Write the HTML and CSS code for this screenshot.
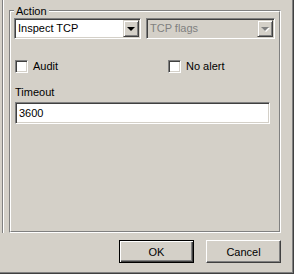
FILE: index.html
```html
<!DOCTYPE html>
<html>
<head>
    <title>Action</title>
    <link rel="stylesheet" href="styles.css">
</head>
<body>
    <div class="window">
        <div class="window-inner">
            <div class="top-area">
                <div class="separator"></div>
                <div class="group">
                    <div class="group-inner">
                        <span class="group-title">Action</span>
                        <div class="combo-row">
                            <div class="combo combo-action">
                                <span class="combo-text">Inspect TCP</span>
                                <span class="combo-btn"><span class="arrow"></span></span>
                            </div>
                            <div class="combo combo-flags disabled">
                                <span class="combo-text">TCP flags</span>
                                <span class="combo-btn"><span class="arrow"></span></span>
                            </div>
                        </div>
                        <div class="check-row">
                            <label class="check-item check-audit">
                                <span class="check-box"></span>
                                <span>Audit</span>
                            </label>
                            <label class="check-item">
                                <span class="check-box"></span>
                                <span>No alert</span>
                            </label>
                        </div>
                        <div class="field-label">Timeout</div>
                        <input class="edit" type="text" value="3600">
                    </div>
                </div>
            </div>
            <div class="buttons">
                <button class="btn btn-default">OK</button>
                <button class="btn">Cancel</button>
            </div>
        </div>
    </div>
</body>
</html>
```

FILE: styles.css
```css
body {
    margin: 0;
    background-color: #d4d0c8;
    font-family: 'Liberation Sans', Arial, sans-serif;
    font-size: 11px;
    color: #000000;
}

.window {
    width: 294px;
    height: 274px;
    box-sizing: border-box;
    border-right: 1px solid #404040;
    border-bottom: 1px solid #404040;
}

.window-inner {
    height: 100%;
    box-sizing: border-box;
    border-right: 1px solid #808080;
    border-bottom: 1px solid #808080;
    display: flex;
    flex-direction: column;
}

.top-area {
    display: flex;
    height: 233px;
}

/* etched line on the left edge */
.separator {
    margin-left: 2px;
    width: 0;
    border-left: 1px solid #808080;
    border-right: 1px solid #ffffff;
}

/* etched group box */
.group {
    margin-left: 5px;
    margin-top: 10px;
    width: 272px;
    height: 223px;
    box-sizing: border-box;
    border: 1px solid;
    border-color: #808080 #ffffff #ffffff #808080;
}

.group-inner {
    position: relative;
    height: 100%;
    box-sizing: border-box;
    border: 1px solid;
    border-color: #ffffff #808080 #808080 #ffffff;
    padding: 6px 0 0 3px;
}

.group-title {
    position: absolute;
    top: -7px;
    left: 3px;
    padding: 0 2px;
    line-height: 13px;
    background-color: #d4d0c8;
}

.combo-row {
    display: flex;
    gap: 5px;
}

.combo {
    display: flex;
    align-items: center;
    height: 21px;
    box-sizing: border-box;
    border: 1px solid;
    border-color: #808080 #ffffff #ffffff #808080;
    box-shadow: inset 1px 1px 0 #404040, inset -1px -1px 0 #d4d0c8;
    background-color: #ffffff;
    padding: 1px;
}

.combo-action {
    width: 127px;
}

.combo-flags {
    width: 129px;
}

.combo-text {
    flex: 1;
    padding-left: 2px;
    line-height: 17px;
    white-space: nowrap;
}

.combo-btn {
    width: 16px;
    height: 17px;
    box-sizing: border-box;
    display: flex;
    align-items: center;
    justify-content: center;
    background-color: #d4d0c8;
    border: 1px solid;
    border-color: #d4d0c8 #404040 #404040 #d4d0c8;
    box-shadow: inset 1px 1px 0 #ffffff, inset -1px -1px 0 #808080;
}

.arrow {
    width: 0;
    height: 0;
    border-left: 4px solid transparent;
    border-right: 4px solid transparent;
    border-top: 4px solid #000000;
}

.combo.disabled {
    background-color: #d4d0c8;
}

.combo.disabled .combo-text {
    color: #808080;
}

.combo.disabled .arrow {
    border-top-color: #808080;
    filter: drop-shadow(1px 1px 0 #ffffff);
}

.check-row {
    display: flex;
    margin-top: 21px;
    padding-left: 1px;
}

.check-item {
    display: flex;
    align-items: center;
    gap: 5px;
    line-height: 13px;
}

.check-audit {
    width: 153px;
}

.check-box {
    width: 13px;
    height: 13px;
    box-sizing: border-box;
    border: 1px solid;
    border-color: #808080 #ffffff #ffffff #808080;
    box-shadow: inset 1px 1px 0 #404040, inset -1px -1px 0 #d4d0c8;
    background-color: #ffffff;
}

.field-label {
    margin-top: 13px;
    padding-left: 1px;
    line-height: 13px;
}

.edit {
    display: block;
    margin: 3px 0 0 1px;
    width: 255px;
    height: 22px;
    box-sizing: border-box;
    border: 1px solid;
    border-color: #808080 #ffffff #ffffff #808080;
    box-shadow: inset 1px 1px 0 #404040, inset -1px -1px 0 #d4d0c8;
    background-color: #ffffff;
    padding: 1px 3px 2px;
    font-family: 'Liberation Sans', Arial, sans-serif;
    font-size: 11px;
    color: #000000;
    outline: none;
}

.buttons {
    display: flex;
    justify-content: flex-end;
    gap: 12px;
    padding: 7px 11px 0 0;
}

.btn {
    width: 75px;
    height: 23px;
    box-sizing: border-box;
    padding: 0;
    background-color: #d4d0c8;
    border: 1px solid;
    border-color: #ffffff #404040 #404040 #ffffff;
    box-shadow: inset -1px -1px 0 #808080;
    font-family: 'Liberation Sans', Arial, sans-serif;
    font-size: 11px;
    color: #000000;
}

.btn-default {
    border-color: #000000;
    box-shadow: inset 1px 1px 0 #ffffff, inset -1px -1px 0 #404040, inset -2px -2px 0 #808080;
}
```
